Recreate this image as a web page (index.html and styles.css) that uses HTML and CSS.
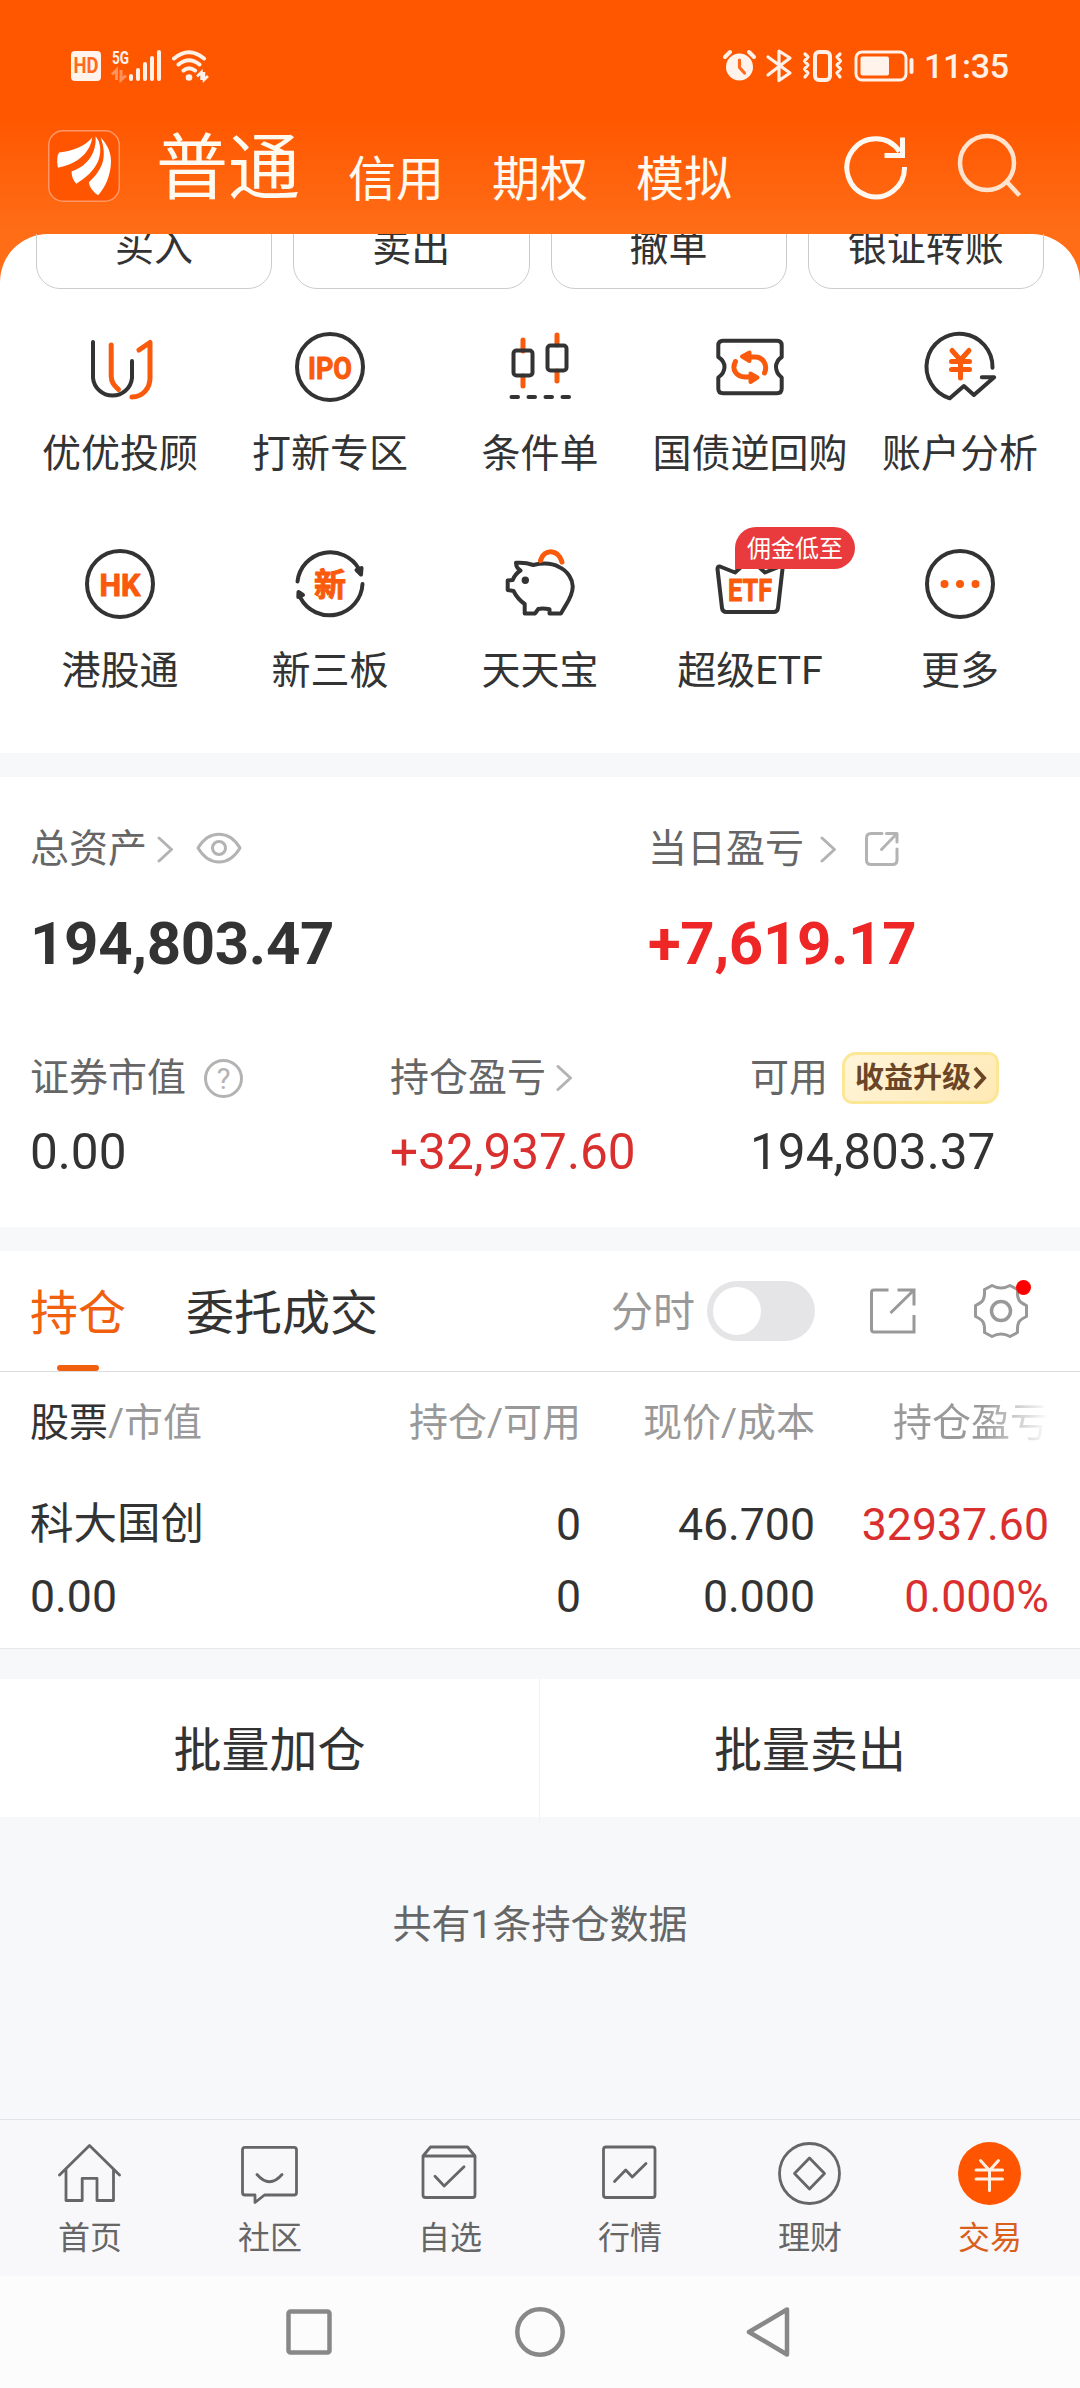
FILE: index.html
```
<!DOCTYPE html>
<html lang="zh-CN">
	<head>
		<meta charset="UTF-8">
		<title>交易</title>
		<meta name="viewport" content="width=device-width, initial-scale=1.0">
		<link rel="stylesheet" href="styles.css">
	</head>
	<body>
		<div class="Header">
			<div class="StatusBar">
				<svg class="StatusLeft" width="140" height="36" viewBox="0 0 140 36">
					<rect x="1" y="3" width="30" height="30" rx="4" fill="#fff3ec"/>
					<text x="16" y="25" class="HdText" textLength="25" lengthAdjust="spacingAndGlyphs">HD</text>
					<text x="42" y="16" class="NetText" textLength="17" lengthAdjust="spacingAndGlyphs">5G</text>
					<path d="M42 26.500L46.500 22V32M51 22V32L56 27.500" fill="none" stroke="#ff9360" stroke-width="3"/>
					<path d="M61 28V31M68 22V31M75 16V31M82 10V31M89 4V31" stroke="#fff0e8" stroke-width="4" stroke-linecap="round"/>
					<g fill="none" stroke="#fff0e8" stroke-width="4" stroke-linecap="round">
						<path d="M104 10.500Q119 -2 134 10.500M108.500 16.500Q119 8 129.500 16.500M113.500 22.500Q119 18 125 22.500"/>
					</g>
					<circle cx="119" cy="29.500" r="3.300" fill="#fff0e8"/>
					<path d="M127 28.500L131.500 24V32M134 24V32L138 28" fill="none" stroke="#fff0e8" stroke-width="2.500"/>
				</svg>
				<div class="StatusRight">
					<svg width="192" height="36" viewBox="0 0 192 36" fill="none" stroke="#fff0e8" stroke-width="3.200" stroke-linecap="round" stroke-linejoin="round">
						<path d="M3 9L8 4M27 4L32 9" stroke-width="4"/>
						<circle cx="17.500" cy="19" r="13.500" fill="#fff3ec" stroke="none"/>
						<path d="M17.500 12V19.500L22.500 25" stroke="#ff6a20"/>
						<path d="M46 9L68 25L57 32.500V3L68 10L46 27"/>
						<rect x="93" y="4" width="15" height="28" rx="4" stroke-width="4"/>
						<path d="M83 6L86 9L82.500 13L86 17L82.500 21L86 25L83 29M118 6L115 9L118.500 13L115 17L118.500 21L115 25L118 29"/>
						<rect x="134" y="4" width="50" height="28" rx="6" stroke-width="3"/>
						<rect x="138.500" y="8.500" width="28.500" height="19" rx="2" fill="#fff3ec" stroke="none"/>
						<path d="M189.500 12V24" stroke-width="4"/>
					</svg>
					<span class="Clock">11:35</span>
				</div>
			</div>
			<div class="NavRow">
				<div class="Logo">
					<svg width="72" height="72" viewBox="0 0 72 72" fill="#fff">
						<path d="M44.300 7.300C38 16 25 21 11 22.500Q8 28 9.900 37.700C26 35 42 25 44.300 7.300Z"/>
						<path d="M47.500 6C49 22 40 36 23.600 41.500Q23.500 49 28.400 53.700C44 44 54 32 52 16Q51 10 47.500 6Z"/>
						<path d="M52.600 7.300C57 12 63 20 63 31C63 45 57 58 50.100 65.300Q42 60 40.800 52.500C54 40 60 28 52.600 7.300Z"/>
					</svg>
				</div>
				<div class="AccountTabs">
					<span class="AccountCurrent">普通</span>
					<span>信用</span>
					<span>期权</span>
					<span>模拟</span>
				</div>
				<div class="HeaderIcons">
					<svg width="68" height="68" viewBox="0 0 68 68" fill="none" stroke="#fff8f0" stroke-width="5">
						<path d="M62.500 34A28.800 29 0 1 1 57.500 18.500M60.500 4.500V22.500H42.500"/>
					</svg>
					<svg width="68" height="68" viewBox="0 0 68 68" fill="none" stroke="#ffe3cf" stroke-width="4.500">
						<circle cx="31" cy="30" r="27"/>
						<path d="M50 48L63.500 62.500"/>
					</svg>
				</div>
			</div>
		</div>

		<div class="PanelBack">
			<div class="Panel">
				<div class="QuickButtons">
					<div class="QuickButton">买入</div>
					<div class="QuickButton">卖出</div>
					<div class="QuickButton">撤单</div>
					<div class="QuickButton">银证转账</div>
				</div>
				<div class="Menu">
					<div class="MenuItem">
						<svg class="MenuIcon" viewBox="0 0 80 80">
							<path d="M13 15V51A19.600 19.600 0 0 0 52 51V34"/>
							<path class="Accent" d="M31.200 18V49C31.200 56 35 59 38.500 62.500M59 23L70 15.500V51C70 62 62 70 52 70"/>
						</svg>
						<span>优优投顾</span>
					</div>
					<div class="MenuItem">
						<svg class="MenuIcon" viewBox="0 0 80 80">
							<circle cx="40" cy="40" r="33"/>
							<text x="40" y="51.500" textLength="44" lengthAdjust="spacingAndGlyphs">IPO</text>
						</svg>
						<span>打新专区</span>
					</div>
					<div class="MenuItem">
						<svg class="MenuIcon" viewBox="0 0 80 80">
							<path class="Accent" d="M23 13V24M23 49V59M57 8V18M57 44V54"/>
							<rect x="13.500" y="23.500" width="19" height="25" rx="3"/>
							<rect x="47.500" y="18.500" width="19" height="25" rx="3"/>
							<path d="M11.500 70H18M28.500 70H35M45.500 70H52M62.500 70H69"/>
						</svg>
						<span>条件单</span>
					</div>
					<div class="MenuItem">
						<svg class="MenuIcon" viewBox="0 0 80 80">
							<path d="M13 13.700H67Q71.700 13.700 71.700 18.500V30Q66 34 66 40T71.700 50.500V61.500Q71.700 66.300 67 66.300H13Q8.300 66.300 8.300 61.500V50.500Q14.500 46 14.500 40T8.300 30V18.500Q8.300 13.700 13 13.700Z"/>
							<path class="Accent" d="M40 30H45C53 30 58 38 54.500 46M25.500 34.500C21 43 27 50 35 50H40"/>
							<path class="Fill" d="M32 29.500L39.500 25.500V34ZM47.500 50.500L40.500 46.500V55Z"/>
						</svg>
						<span>国债逆回购</span>
					</div>
					<div class="MenuItem">
						<svg class="MenuIcon" viewBox="0 0 80 80">
							<path d="M72.500 40.700A33 33 0 1 0 29.800 71.300L43.900 59L53.900 68L74.200 50.300H61.800"/>
							<path class="Accent" d="M32 23.500L40.500 33L49 23.500M31.500 34.500H49.500M31.500 42.500H49.500M40.500 34V51"/>
						</svg>
						<span>账户分析</span>
					</div>
					<div class="MenuItem">
						<svg class="MenuIcon" viewBox="0 0 80 80">
							<circle cx="40" cy="40" r="33"/>
							<text x="40" y="51.500" textLength="41" lengthAdjust="spacingAndGlyphs">HK</text>
						</svg>
						<span>港股通</span>
					</div>
					<div class="MenuItem">
						<svg class="MenuIcon" viewBox="0 0 80 80">
							<path d="M7.500 37.500A33 33 0 0 1 69 25M72.500 40A33 33 0 0 1 10.500 54"/>
							<path class="Dark" d="M66.500 26L71.500 24L71 30.500ZM8.500 48L8.300 53L13 51Z"/>
							<text x="40" y="51.500">新</text>
						</svg>
						<span>新三板</span>
					</div>
					<div class="MenuItem">
						<svg class="MenuIcon" viewBox="0 0 80 80">
							<path d="M33.300 21C42 19 52 19 59 23C68 27 73 36 72.700 43C72.500 54 65 61 61 69.500H49.500V65.300Q43 64 38.300 65L35 69.500H24.700V60C19 56 16 52 13.500 47L7.700 46V36.500L12.700 36Q15 30 20.500 26.500Q16 24 16 18.800Q25 18 33.300 21Z"/>
							<circle class="Dark" cx="25.300" cy="36.300" r="1.700"/>
							<path class="Accent" d="M40.500 16.500C44 4.500 58 4.500 62 18"/>
						</svg>
						<span>天天宝</span>
					</div>
					<div class="MenuItem">
						<svg class="MenuIcon" viewBox="0 0 80 80">
							<path d="M10 22.500L25 28.500L40 15L55 28.500L70 22.500Q72.500 22 72.500 25L68 64Q67.500 68 63.500 68H16.500Q12.500 68 12 64L7.500 25Q7.500 22 10 22.500Z"/>
							<text x="40" y="57" textLength="44" lengthAdjust="spacingAndGlyphs">ETF</text>
						</svg>
						<div class="Badge">佣金低至</div>
						<span>超级ETF</span>
					</div>
					<div class="MenuItem">
						<svg class="MenuIcon" viewBox="0 0 80 80">
							<circle cx="40" cy="40" r="33"/>
							<path class="Fill" d="M24.500 40H24.510M40 40H40.010M55.500 40H55.510" stroke-width="8"/>
						</svg>
						<span>更多</span>
					</div>
				</div>
			</div>
		</div>

		<div class="Assets">
			<div class="AssetsTop">
				<div class="Asset">
					<div class="AssetLabel">总资产
						<svg width="56" height="40" viewBox="0 0 56 40" class="Gray ArrowEye"><path d="M2 9L14.500 20.500L2 32"/></svg>
						<svg width="46" height="40" viewBox="0 0 46 40" class="Gray Eye">
							<path d="M2 19C8 9 15 5.300 23 5.300S38 9 44 19C38 29 31 33 23 33S8 29 2 19Z"/>
							<circle cx="23" cy="19" r="6.500"/>
						</svg>
					</div>
					<div class="AssetTotal">194,803.47</div>
				</div>
				<div class="Asset">
					<div class="AssetLabel">当日盈亏
						<svg width="44" height="40" viewBox="0 0 44 40" class="Gray ArrowDay"><path d="M2 9L14.500 20.500L2 32"/></svg>
						<svg width="36" height="40" viewBox="0 0 36 40" class="Gray">
							<path d="M18 4.500H7Q2.500 4.500 2.500 9V31Q2.500 35.500 7 35.500H28.500Q33 35.500 33 31V20M22.500 4.500H33V13M33 4.500L17.500 20.500"/>
						</svg>
					</div>
					<div class="AssetTotal Red">+7,619.17</div>
				</div>
			</div>
			<div class="AssetsBottom">
				<div class="Asset">
					<div class="AssetLabel">证券市值
						<span class="Help">?</span>
					</div>
					<div class="AssetValue">0.00</div>
				</div>
				<div class="Asset">
					<div class="AssetLabel">持仓盈亏
						<svg width="18" height="40" viewBox="0 0 18 40" class="Gray ArrowHold"><path d="M2 8.500L14.500 20L2 31.500"/></svg>
					</div>
					<div class="AssetValue DarkRed">+32,937.60</div>
				</div>
				<div class="Asset">
					<div class="AssetLabel">可用
						<span class="Upgrade"><span>收益升级</span>
							<svg width="14" height="24" viewBox="0 0 14 24" fill="none" stroke="#6a4526" stroke-width="4"><path d="M2 2L11 12L2 22"/></svg>
						</span>
					</div>
					<div class="AssetValue">194,803.37</div>
				</div>
			</div>
		</div>

		<div class="Holdings">
			<div class="HoldTabs">
				<div class="HoldTab HoldTabActive">持仓</div>
				<div class="HoldTab">委托成交</div>
				<div class="HoldTools">
					<span class="MinuteLabel">分时</span>
					<span class="Switch"></span>
					<svg class="ShareIcon" width="48" height="48" viewBox="0 0 48 48">
						<path d="M19.500 3H5Q2.500 3 2.500 5.500V42.500Q2.500 45 5 45H45V28M28.500 3H45V18.500M45 3L21.500 26"/>
					</svg>
					<div class="Setting">
						<svg width="56" height="56" viewBox="0 0 56 56">
							<path d="M19 2.500Q28 7.500 37 2.500L44.500 6.500C44 17 46 19 53.500 22.500V33.500C46 37 44 39 44.500 49.500L37 53.500Q28 48.500 19 53.500L11.500 49.500C12 39 10 37 2.500 33.500V22.500C10 19 12 17 11.500 6.500Z" stroke-linejoin="round"/>
							<circle cx="28" cy="28" r="9.500" stroke-width="3.500"/>
						</svg>
						<i class="Dot"></i>
					</div>
				</div>
			</div>
			<div class="HoldHead">
				<div><b>股票</b>/市值</div>
				<div>持仓/可用</div>
				<div>现价/成本</div>
				<div class="Fade">持仓盈亏</div>
			</div>
			<div class="HoldRow">
				<div><p class="StockName">科大国创</p><p>0.00</p></div>
				<div><p>0</p><p>0</p></div>
				<div><p>46.700</p><p>0.000</p></div>
				<div class="DarkRed"><p>32937.60</p><p>0.000%</p></div>
			</div>
		</div>

		<div class="Batch">
			<div>批量加仓</div>
			<div>批量卖出</div>
		</div>

		<div class="Summary">共有1条持仓数据</div>

		<div class="TabBar">
			<div class="TabItem">
				<svg viewBox="0 0 64 64"><path d="M1.500 34L31.500 4.500L61.500 34M8 28.500V59.500H24.200V37.300H39V59.500H55.500V28.500"/></svg>
				<span>首页</span>
			</div>
			<div class="TabItem">
				<svg viewBox="0 0 64 64"><path d="M7 6.300H56Q58.500 6.300 58.500 9V51.500Q58.500 54 56 54H26.500L17 61.500V54H7Q4.500 54 4.500 51.500V9Q4.500 6.300 7 6.300ZM19 33.500Q31.500 48 44 33.500"/></svg>
				<span>社区</span>
			</div>
			<div class="TabItem">
				<svg viewBox="0 0 64 64"><path d="M5 15L12.500 6H49.500L57 15V54Q57 56.500 54.500 56.500H7.500Q5 56.500 5 54ZM5 15H57M17 35.300L26.200 45L46 25.700"/></svg>
				<span>自选</span>
			</div>
			<div class="TabItem">
				<svg viewBox="0 0 64 64"><path d="M8 6H54.500Q57 6 57 8.500V54Q57 56.500 54.500 56.500H8Q5.500 56.500 5.500 54V8.500Q5.500 6 8 6ZM16.500 40.500L27.700 29L34.300 36L48 22.500"/></svg>
				<span>行情</span>
			</div>
			<div class="TabItem">
				<svg viewBox="0 0 64 64"><circle cx="31.500" cy="32.500" r="30"/><path d="M31.500 17L46.500 32.500L31.500 48L16.500 32.500Z"/></svg>
				<span>理财</span>
			</div>
			<div class="TabItem TabActive">
				<svg viewBox="0 0 64 64"><circle cx="31.500" cy="32.500" r="31.500" fill="#f50" stroke="none"/><path d="M22.500 19.500L31.500 29.500L40.500 19.500M18 29H44.500M18 38H44.500M31.500 29V49.500" stroke="#fff0e4" stroke-width="3"/></svg>
				<span>交易</span>
			</div>
		</div>
		<div class="SystemBar">
			<svg width="52" height="52" viewBox="0 0 52 52"><rect x="5.500" y="5.500" width="41" height="41" rx="2"/></svg>
			<svg width="52" height="52" viewBox="0 0 52 52"><circle cx="26" cy="26" r="22.700"/></svg>
			<svg width="52" height="52" viewBox="0 0 52 52"><path d="M4 26L42 3.500V48.500Z"/></svg>
		</div>
	</body>
</html>
```
FILE: styles.css
```
* {
	box-sizing: border-box;
}

body {
	margin: 0;
	width: 1080px;
	height: 2388px;
	display: flex;
	flex-direction: column;
	overflow: hidden;
	background: #f7f8fa;
	color: #333;
	font-family: Roboto, "Noto Sans CJK SC", sans-serif;
	font-size: 39px;
	line-height: 48px;
}

p {
	margin: 0;
}

svg {
	display: block;
	flex: none;
}

.Red {
	color: #ee2626;
}

.DarkRed {
	color: #d9302f;
}

/* header */
.Header {
	height: 234px;
	padding-top: 48px;
	background: linear-gradient(#ff5700 115px, #ff6d17 234px);
}

.StatusBar {
	display: flex;
	justify-content: space-between;
	height: 36px;
	padding: 0 71px 0 70px;
}

.StatusRight {
	display: flex;
	align-items: center;
	gap: 10px;
}

.HdText {
	font-size: 22px;
	font-weight: 700;
	fill: #ff6a20;
	text-anchor: middle;
}

.NetText {
	font-size: 19px;
	font-weight: 700;
	fill: #fff0e8;
}

.Clock {
	color: #fff0e8;
	font-size: 34px;
	font-weight: 500;
	line-height: 38px;
	width: 85px;
	letter-spacing: -.3px;
	white-space: nowrap;
}

.NavRow {
	display: flex;
	padding: 46px 56px 0 48px;
}

.Logo {
	width: 72px;
	height: 72px;
	border-radius: 15px;
	background: #ff5400;
	box-shadow: inset 0 0 0 1.5px rgba(255, 255, 255, .4);
}

.AccountTabs {
	display: flex;
	align-items: flex-end;
	gap: 48px;
	margin-left: 36px;
	height: 76px;
	color: #fffaf0;
	font-size: 48px;
	line-height: 52px;
}

.AccountCurrent {
	font-size: 72px;
	line-height: 74px;
}

.HeaderIcons {
	display: flex;
	gap: 46px;
	margin-left: auto;
	padding-top: 3px;
}

/* shortcuts */
.PanelBack {
	background: #ff6d17;
}

.Panel {
	height: 519px;
	border-radius: 48px 48px 0 0;
	background: #fff;
}

.QuickButtons {
	display: flex;
	gap: 21px;
	height: 55px;
	padding: 0 36px;
	overflow: hidden;
}

.QuickButton {
	flex: 1;
	height: 84px;
	margin-top: -29px;
	border: 1px solid #ccc;
	border-radius: 24px;
	text-align: center;
	line-height: 84px;
}

.Menu {
	display: grid;
	grid-template-columns: repeat(5, 210px);
	grid-auto-rows: 217px;
	padding: 38px 15px 0;
}

.MenuItem {
	position: relative;
	display: flex;
	flex-direction: column;
	align-items: center;
	gap: 23px;
	white-space: nowrap;
}

.MenuIcon {
	width: 80px;
	height: 80px;
	fill: none;
	stroke: #333;
	stroke-width: 4;
	stroke-linecap: round;
	stroke-linejoin: round;
}

.MenuIcon text {
	font-size: 32px;
	font-weight: 700;
	text-anchor: middle;
	fill: #f95a0c;
	stroke: #f95a0c;
	stroke-width: 1;
}

.Accent {
	stroke: #f95a0c;
	stroke-width: 5;
}

.Fill {
	fill: #f95a0c;
	stroke: #f95a0c;
}

.Dark {
	fill: #333;
}

.Badge {
	position: absolute;
	left: 90px;
	top: -17px;
	width: 120px;
	height: 42px;
	border-radius: 21px 21px 21px 0;
	background: #e93b3d;
	color: #fff;
	font-size: 24px;
	line-height: 44px;
	text-align: center;
}

/* assets */
.Assets {
	height: 450px;
	margin-top: 24px;
	padding: 48px 30px 0;
	background: #fff;
}

.AssetsTop {
	display: grid;
	grid-template-columns: 618px 1fr;
	height: 229px;
}

.AssetsBottom {
	display: grid;
	grid-template-columns: 360px 360px 1fr;
}

.AssetLabel {
	display: flex;
	align-items: center;
	height: 48px;
	color: #666;
	white-space: nowrap;
}

.Gray {
	fill: none;
	stroke: #b3b3b3;
	stroke-width: 3;
	stroke-linecap: round;
	stroke-linejoin: round;
}

.ArrowEye {
	margin-left: 10px;
	margin-right: -17px;
}

.ArrowDay {
	margin-left: 16px;
}

.ArrowHold {
	margin-left: 10px;
}

.AssetTotal {
	margin-top: 35px;
	font-size: 60px;
	font-weight: 700;
	letter-spacing: -.35px;
	line-height: 72px;
}

.AssetValue {
	margin-top: 20px;
	font-size: 49.5px;
	line-height: 60px;
}

.Help {
	width: 39px;
	height: 39px;
	margin-left: 18px;
	border: 3px solid #b3b3b3;
	border-radius: 50%;
	color: #b3b3b3;
	font-size: 29px;
	line-height: 34px;
	text-align: center;
}

.Upgrade {
	display: flex;
	align-items: center;
	gap: 2px;
	width: 157px;
	height: 52px;
	margin-left: 14px;
	padding-left: 10px;
	border: 3px solid #fbe795;
	border-radius: 14px 10px 14px 10px;
	background: linear-gradient(135deg, #fff5da, #ffe9b5);
	color: #6a4526;
	font-size: 29px;
	font-weight: 700;
}

/* holdings */
.Holdings {
	height: 398px;
	margin-top: 24px;
	border-bottom: 1px solid #e8e8ea;
	background: #fff;
}

.HoldTabs {
	display: flex;
	height: 121px;
	padding: 0 51px 0 30px;
	border-bottom: 1px solid #dcdcdc;
	font-size: 48px;
	line-height: 126px;
}

.HoldTab {
	position: relative;
	margin-right: 60px;
}

.HoldTabActive {
	color: #f0600f;
}

.HoldTabActive::after {
	content: "";
	position: absolute;
	left: 27px;
	bottom: 0;
	width: 42px;
	height: 6px;
	border-radius: 3px;
	background: #f0600f;
}

.HoldTools {
	display: flex;
	align-items: center;
	height: 120px;
	margin-left: auto;
}

.HoldTools svg {
	fill: none;
	stroke: #999;
	stroke-width: 3;
}

.MinuteLabel {
	padding-top: 4px;
	color: #999;
	font-size: 42px;
	line-height: 60px;
}

.Switch {
	width: 108px;
	height: 60px;
	margin-left: 12px;
	border-radius: 30px;
	background: #e5e5e7;
}

.Switch::before {
	content: "";
	display: block;
	width: 48px;
	height: 48px;
	margin: 6px;
	border-radius: 50%;
	background: #fff;
}

.ShareIcon {
	margin: 0 56px 0 54px;
}

.Setting {
	position: relative;
}

.Dot {
	position: absolute;
	right: -2px;
	top: -3px;
	width: 15px;
	height: 15px;
	border-radius: 50%;
	background: #f00;
}

.HoldHead, .HoldRow {
	display: grid;
	grid-template-columns: 300px 251px 234px 234px;
	padding: 0 31px 0 30px;
	text-align: right;
}

.HoldHead {
	padding-top: 27px;
	color: #999;
}

.HoldHead b {
	color: #333;
	font-weight: 400;
}

.HoldHead div:first-child, .HoldRow div:first-child {
	text-align: left;
}

.Fade {
	background: linear-gradient(90deg, #999 72%, #fff 100%);
	-webkit-background-clip: text;
	background-clip: text;
	color: transparent;
}

.HoldRow {
	padding-top: 42px;
	font-size: 44.6px;
	line-height: 72px;
}

.StockName {
	font-size: 43.5px;
}

.Batch {
	display: grid;
	grid-template-columns: 1fr 1fr;
	height: 138px;
	margin-top: 30px;
	background: #fff;
	font-size: 48px;
	line-height: 144px;
	text-align: center;
}

.Batch div:first-child {
	border-right: 1px solid #f3f3f4;
}

.Summary {
	margin-top: 84px;
	color: #666;
	text-align: center;
}

/* bottom bars */
.TabBar {
	display: flex;
	height: 157px;
	margin-top: auto;
	border-top: 1px solid #e1e3e6;
	background: #f8f8fa;
	color: #666;
	font-size: 32px;
}

.TabItem {
	flex: 1;
	display: flex;
	flex-direction: column;
	align-items: center;
	gap: 9px;
	padding-top: 21px;
}

.TabItem svg {
	width: 64px;
	height: 64px;
	fill: none;
	stroke: #666;
	stroke-width: 2.8;
	stroke-linecap: round;
	stroke-linejoin: round;
}

.TabActive {
	color: #d95f1c;
}

.SystemBar {
	display: flex;
	flex: none;
	justify-content: center;
	gap: 179px;
	height: 112px;
	padding-top: 30px;
	background: #fcfcfc;
}

.SystemBar svg {
	fill: none;
	stroke: #888;
	stroke-width: 4.5;
	stroke-linejoin: round;
}
```
